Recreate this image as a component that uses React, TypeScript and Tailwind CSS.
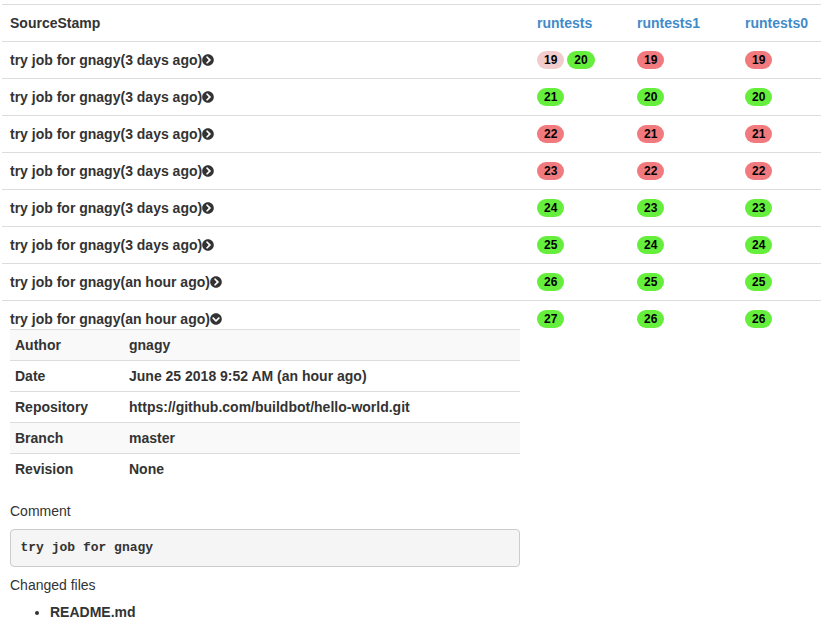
import { FaChevronCircleRight, FaChevronCircleDown } from 'react-icons/fa';

type Build = { n: number; r: 'ok' | 'fail' | 'retry' };

const rows: { when: string; open?: boolean; cols: Build[][] }[] = [
  { when: '3 days ago', cols: [[{ n: 19, r: 'retry' }, { n: 20, r: 'ok' }], [{ n: 19, r: 'fail' }], [{ n: 19, r: 'fail' }]] },
  { when: '3 days ago', cols: [[{ n: 21, r: 'ok' }], [{ n: 20, r: 'ok' }], [{ n: 20, r: 'ok' }]] },
  { when: '3 days ago', cols: [[{ n: 22, r: 'fail' }], [{ n: 21, r: 'fail' }], [{ n: 21, r: 'fail' }]] },
  { when: '3 days ago', cols: [[{ n: 23, r: 'fail' }], [{ n: 22, r: 'fail' }], [{ n: 22, r: 'fail' }]] },
  { when: '3 days ago', cols: [[{ n: 24, r: 'ok' }], [{ n: 23, r: 'ok' }], [{ n: 23, r: 'ok' }]] },
  { when: '3 days ago', cols: [[{ n: 25, r: 'ok' }], [{ n: 24, r: 'ok' }], [{ n: 24, r: 'ok' }]] },
  { when: 'an hour ago', cols: [[{ n: 26, r: 'ok' }], [{ n: 25, r: 'ok' }], [{ n: 25, r: 'ok' }]] },
  { when: 'an hour ago', open: true, cols: [[{ n: 27, r: 'ok' }], [{ n: 26, r: 'ok' }], [{ n: 26, r: 'ok' }]] },
];

// striping in the original skips rows, so it is kept per row
const details: [string, string, boolean][] = [
  ['Author', 'gnagy', true],
  ['Date', 'June 25 2018 9:52 AM (an hour ago)', false],
  ['Repository', 'https://github.com/buildbot/hello-world.git', false],
  ['Branch', 'master', true],
  ['Revision', 'None', false],
];

const Badge = ({ b }: { b: Build }) => (
  <span
    className={
      'inline-block rounded-[10px] px-[7px] py-[3px] text-[12px] leading-[12px] font-bold text-black ' +
      (b.r === 'ok' ? 'bg-[#66ee3c]' : b.r === 'fail' ? 'bg-[#f17a7e]' : 'bg-[#f2cccc]')
    }
  >
    {b.n}
  </span>
);

const App = () => {
  return (
    <div className="pt-1 px-[2px] text-[14px] leading-[20px] text-[#333]" style={{ fontFamily: '"Liberation Sans", Arial, sans-serif' }}>
      <table className="w-full border-collapse">
        <thead>
          <tr className="border-t border-[#ddd]">
            <th className="w-[527px] p-2 text-left font-bold">SourceStamp</th>
            <th className="w-[100px] p-2 text-left font-bold text-[#428bca]">runtests</th>
            <th className="w-[108px] p-2 text-left font-bold text-[#428bca]">runtests1</th>
            <th className="p-2 text-left font-bold text-[#428bca]">runtests0</th>
          </tr>
        </thead>
        <tbody>
          {rows.map((row, i) => (
            <tr key={i} className="border-t border-[#ddd] align-top">
              <td className="p-2 font-bold">
                <div className="flex items-center">
                  try job for gnagy({row.when})
                  {row.open ? <FaChevronCircleDown size={12} /> : <FaChevronCircleRight size={12} />}
                </div>
                {row.open && (
                  <div className="pr-px">
                    <table className="w-full border-collapse mb-[17px]">
                      <tbody>
                        {details.map(([k, v, striped]) => (
                          <tr key={k} className={'border-t border-[#ddd] ' + (striped ? 'bg-[#f9f9f9]' : '')}>
                            <td className="w-[114px] p-[5px]">{k}</td>
                            <td className="p-[5px]">{v}</td>
                          </tr>
                        ))}
                      </tbody>
                    </table>
                    <div className="font-normal">Comment</div>
                    <pre className="mt-2 mb-2 rounded border border-[#ccc] bg-[#f5f5f5] px-[9.5px] py-[9px] text-[13px] leading-[18px] font-bold" style={{ fontFamily: '"Liberation Mono", "Courier New", monospace' }}>
                      try job for gnagy
                    </pre>
                    <div className="font-normal">Changed files</div>
                    <ul className="mt-[7px] pl-10 list-disc">
                      <li>README.md</li>
                    </ul>
                  </div>
                )}
              </td>
              {row.cols.map((c, k) => (
                <td key={k} className="p-2">
                  <div className="flex gap-[3px] pt-[1px]">
                    {c.map((b) => (
                      <Badge key={b.n} b={b} />
                    ))}
                  </div>
                </td>
              ))}
            </tr>
          ))}
        </tbody>
      </table>
    </div>
  );
};

export default App;
